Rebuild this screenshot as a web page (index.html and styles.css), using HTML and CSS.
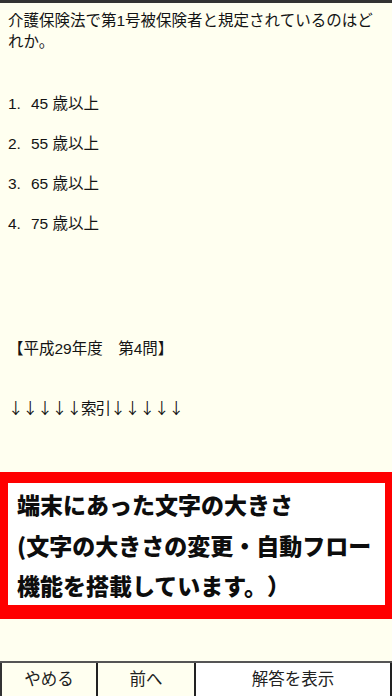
FILE: index.html
```html
<!DOCTYPE html>
<html lang="ja">
<head>
<meta charset="utf-8">
<link rel="stylesheet" href="styles.css">
</head>
<body>
<div class="page">
  <div class="content">
    <p class="question">介護保険法で第1号被保険者と規定されているのはどれか。</p>
    <ol class="options">
      <li><span class="num">1.</span>45 歳以上</li>
      <li><span class="num">2.</span>55 歳以上</li>
      <li><span class="num">3.</span>65 歳以上</li>
      <li><span class="num">4.</span>75 歳以上</li>
    </ol>
    <p class="source">【平成29年度　第4問】</p>
    <p class="index">↓↓↓↓↓索引↓↓↓↓↓</p>
  </div>
  <div class="promo">
    <div class="promo-inner">端末にあった文字の大きさ<br>(文字の大きさの変更・自動フロー<br>機能を搭載しています。）</div>
  </div>
  <div class="toolbar">
    <div class="btn">やめる</div>
    <div class="btn">前へ</div>
    <div class="btn btn-primary">解答を表示</div>
  </div>
</div>
</body>
</html>
```
FILE: styles.css
```css
* { box-sizing: border-box; }
html, body {
  margin: 0;
  padding: 0;
  background: #fffff0;
}
body {
  font-family: "Noto Sans CJK JP", "Noto Sans", sans-serif;
  color: #141414;
  text-spacing-trim: space-all;
}
.page {
  height: 696px;
  display: flex;
  flex-direction: column;
  border-top: 3px solid #333;
}
.content {
  padding: 0 8px;
  font-size: 15.5px;
}
.question {
  margin: 7px 0 0;
  line-height: 21px;
  font-family: "Liberation Sans", "Noto Sans CJK JP", sans-serif;
}
.options {
  list-style: none;
  margin: 32px 0 0;
  padding: 0;
  font-family: "Liberation Sans", "Noto Sans CJK JP", sans-serif;
}
.options li {
  line-height: 40px;
  height: 40px;
}
.num {
  display: inline-block;
  width: 23px;
}
.source {
  margin: 94px 0 0;
  line-height: 21px;
  font-family: "Liberation Sans", "Noto Sans CJK JP", sans-serif;
}
.index {
  margin: 38px 0 0;
  line-height: 21px;
  letter-spacing: -0.9px;
}
.promo {
  margin-top: 54px;
  border-style: solid;
  border-color: #ff0000;
  border-width: 11px 7px 14px 8px;
}
.promo-inner {
  background: #ffffff;
  height: 122px;
  padding-left: 9px;
  padding-top: 1px;
  font-size: 23px;
  font-weight: 900;
  line-height: 40.7px;
  color: #0d0d0d;
  white-space: nowrap;
  text-spacing-trim: space-all;
}
.toolbar {
  margin-top: auto;
  height: 35px;
  display: grid;
  grid-template-columns: 98px 98px 1fr;
  border-top: 2px solid #555;
}
.btn {
  display: flex;
  align-items: center;
  justify-content: center;
  padding-bottom: 3px;
  font-size: 16.5px;
  color: #222;
  border-right: 2px solid #222;
  background: #fffff0;
}
.btn:first-child {
  border-left: 2px solid #333;
}
.btn-primary {
  background: #ffffff;
}
```
